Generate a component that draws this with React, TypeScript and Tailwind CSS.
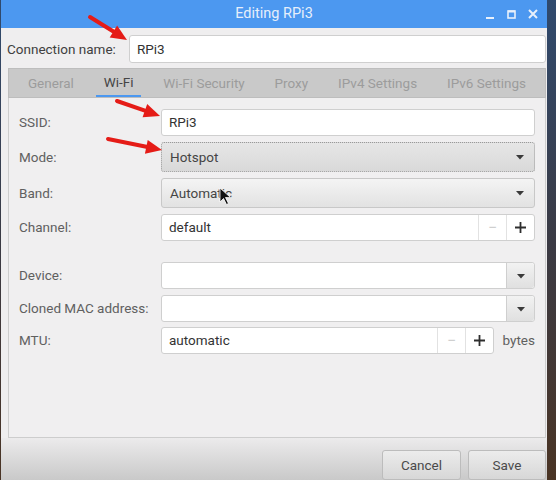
import React from 'react';

// ── Small pieces ─────────────────────────────────────────────────

const font = "font-['Roboto','Liberation_Sans',sans-serif]";

function Caret() {
  return (
    <svg width="10" height="6" viewBox="0 0 10 6">
      <path d="M1 1h8L5 5.5z" fill="#3a3a3a" />
    </svg>
  );
}

function Label({ children }: { children: React.ReactNode }) {
  return <div className="w-[142px] shrink-0 text-[13.5px] text-[#606060]">{children}</div>;
}

function TextInput({ value, h = 'h-[27px]' }: { value?: string; h?: string }) {
  return (
    <div
      className={`flex-1 ${h} flex items-center px-[7px] bg-white border border-[#cfcfcf] rounded-[3px] text-[13.5px] text-[#333333]`}
    >
      {value}
    </div>
  );
}

function Combo({ value, focused }: { value: string; focused?: boolean }) {
  return (
    <div
      className={`flex-1 h-[30px] flex items-center justify-between pl-[8px] pr-[9px] rounded-[3px] text-[13.5px] text-[#454545] ${
        focused
          ? 'border border-dotted border-[#9a9a9a] bg-gradient-to-b from-[#e6e6e6] to-[#d9d9d9]'
          : 'border border-[#c8c8c8] bg-gradient-to-b from-[#f4f4f4] to-[#e2e2e2]'
      }`}
    >
      <span>{value}</span>
      <Caret />
    </div>
  );
}

function Spin({ value }: { value: string }) {
  return (
    <div className="flex-1 h-[27px] flex bg-white border border-[#cfcfcf] rounded-[3px] text-[13.5px] text-[#333333]">
      <div className="flex-1 flex items-center px-[7px]">{value}</div>
      <div className="w-[28px] flex items-center justify-center border-l border-[#e2e2e2] text-[#cfcfcf] text-[16px]">
        −
      </div>
      <div className="w-[28px] flex items-center justify-center border-l border-[#e2e2e2]">
        <svg width="11" height="11" viewBox="0 0 11 11">
          <path d="M5.5 0v11M0 5.5h11" stroke="#2e2e2e" strokeWidth="1.8" />
        </svg>
      </div>
    </div>
  );
}

function EntryCombo() {
  return (
    <div className="flex-1 h-[27px] flex bg-white border border-[#cfcfcf] rounded-[3px]">
      <div className="flex-1" />
      <div className="w-[28px] flex items-center justify-center border-l border-[#cfcfcf] bg-gradient-to-b from-[#f2f2f2] to-[#e0e0e0] rounded-r-[3px]">
        <Caret />
      </div>
    </div>
  );
}

function Arrow({ x1, y1, x2, y2 }: { x1: number; y1: number; x2: number; y2: number }) {
  const a = Math.atan2(y2 - y1, x2 - x1);
  const len = 16;
  const w = 7;
  const bx = x2 - Math.cos(a) * len;
  const by = y2 - Math.sin(a) * len;
  const px = -Math.sin(a) * w;
  const py = Math.cos(a) * w;
  return (
    <g>
      <line x1={x1} y1={y1} x2={bx} y2={by} stroke="#e51c17" strokeWidth="4" strokeLinecap="round" />
      <polygon points={`${x2},${y2} ${bx + px},${by + py} ${bx - px},${by - py}`} fill="#e51c17" />
    </g>
  );
}

// ── Page ─────────────────────────────────────────────────────────

export default function App() {
  const tabs = ['General', 'Wi-Fi', 'Wi-Fi Security', 'Proxy', 'IPv4 Settings', 'IPv6 Settings'];

  return (
    <div className={`relative w-[556px] h-[480px] overflow-hidden bg-gradient-to-b from-[#2f4a6e] via-[#3a3a44] to-[#4a3424] ${font}`}>
      {/* Window */}
      <div className="ml-[1px] w-[546px] h-full flex flex-col bg-[#efeeef]">
        {/* Title bar */}
        <div className="relative h-[28px] shrink-0 flex items-center justify-center bg-[#4c98f0]">
          <span className="text-[14.5px] text-[#e6effb]">Editing RPi3</span>
          <div className="absolute right-[9px] top-0 h-full flex items-center gap-[12px]">
            <svg width="9" height="9" viewBox="0 0 9 9">
              <path d="M0 8h8" stroke="#e8f0fb" strokeWidth="2" />
            </svg>
            <svg width="9" height="9" viewBox="0 0 9 9">
              <rect x="1" y="1" width="7" height="7" fill="none" stroke="#e8f0fb" strokeWidth="1.6" />
              <path d="M1 1.5h7" stroke="#e8f0fb" strokeWidth="2" />
            </svg>
            <svg width="10" height="10" viewBox="0 0 10 10">
              <path d="M1 1l8 8M9 1l-8 8" stroke="#e8f0fb" strokeWidth="2" />
            </svg>
          </div>
        </div>

        {/* Connection name */}
        <div className="flex items-center h-[28px] mt-[7px] pl-[6px] pr-[1px]">
          <div className="w-[122px] shrink-0 text-[13.5px] text-[#404040]">Connection name:</div>
          <TextInput value="RPi3" h="h-[28px]" />
        </div>

        {/* Notebook */}
        <div className="mt-[5px] ml-[7px] mr-[1px] flex flex-col">
          <div className="h-[30px] flex items-stretch justify-around bg-[#c9c9c9] border border-[#bdbdbd] px-[4px]">
            {tabs.map((t) => (
              <div
                key={t}
                className={`flex items-center px-[8px] text-[13.5px] ${
                  t === 'Wi-Fi' ? 'text-[#454545] border-b-2 border-[#4c98f0]' : 'text-[#9c9c9c]'
                }`}
              >
                {t}
              </div>
            ))}
          </div>

          <div className="h-[340px] flex flex-col gap-[6px] pt-[11px] pl-[10px] pr-[10px] border border-t-0 border-[#cdcdcd] bg-[#f0eff0]">
            <div className="flex items-center">
              <Label>SSID:</Label>
              <TextInput value="RPi3" />
            </div>
            <div className="flex items-center">
              <Label>Mode:</Label>
              <Combo value="Hotspot" focused />
            </div>
            <div className="flex items-center">
              <Label>Band:</Label>
              <Combo value="Automatic" />
            </div>
            <div className="flex items-center">
              <Label>Channel:</Label>
              <Spin value="default" />
            </div>
            <div className="flex items-center mt-[15px]">
              <Label>Device:</Label>
              <EntryCombo />
            </div>
            <div className="flex items-center">
              <Label>Cloned MAC address:</Label>
              <EntryCombo />
            </div>
            <div className="flex items-center -mt-[1px]">
              <Label>MTU:</Label>
              <Spin value="automatic" />
              <span className="w-[41px] text-right text-[13.5px] text-[#606060]">bytes</span>
            </div>
          </div>
        </div>

        {/* Buttons */}
        <div className="flex-1 flex justify-end items-start gap-[7px] pt-[12px] pr-[1px] bg-gradient-to-b from-[#ecebec] to-[#c9c9c9]">
          <div className="w-[79px] h-[30px] flex items-center justify-center rounded-[3px] border border-[#bcbcbc] bg-gradient-to-b from-[#ececec] to-[#d7d7d7] text-[13.5px] text-[#4a4a4a]">
            Cancel
          </div>
          <div className="w-[78px] h-[30px] flex items-center justify-center rounded-[3px] border border-[#bcbcbc] bg-gradient-to-b from-[#ececec] to-[#d7d7d7] text-[13.5px] text-[#4a4a4a]">
            Save
          </div>
        </div>
      </div>

      {/* Annotation arrows and pointer */}
      <svg className="absolute inset-0 pointer-events-none" width="556" height="480">
        <Arrow x1={90} y1={17} x2={127} y2={40} />
        <Arrow x1={117} y1={101} x2={160} y2={116} />
        <Arrow x1={108} y1={139} x2={162} y2={150} />
        <path d="M220 188v14l3.5-3.5 3 6 2-1-3-6h5z" fill="#111" stroke="#fff" strokeWidth="0.8" />
      </svg>
    </div>
  );
}
